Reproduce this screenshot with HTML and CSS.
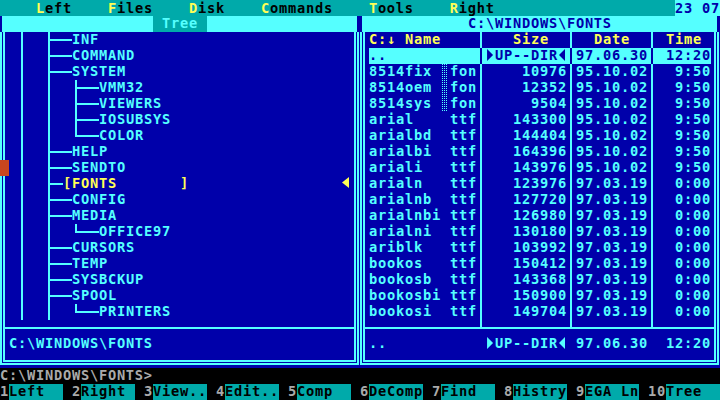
FILE: index.html
```html
<!DOCTYPE html>
<html>
<head>
<meta charset="utf-8">
<title>Navigator</title>
<link rel="stylesheet" href="styles.css">
</head>
<body>
<div class="screen">
  <div class="menubar">
    <nav class="menu">
      <span><b>L</b>eft</span>
      <span><b>F</b>iles</span>
      <span><b>D</b>isk</span>
      <span><b>C</b>ommands</span>
      <span><b>T</b>ools</span>
      <span><b>R</b>ight</span>
    </nav>
    <div class="clock">23 07</div>
  </div>

  <div class="panels">
    <section class="panel tree">
      <div class="head"><span class="title">Tree</span></div>
      <div class="row"><i></i><i></i><i class="v"></i><i></i><i></i><i class="t"></i><i class="h"></i><i class="h"></i><span>INF</span></div>
      <div class="row"><i></i><i></i><i class="v"></i><i></i><i></i><i class="t"></i><i class="h"></i><i class="h"></i><span>COMMAND</span></div>
      <div class="row"><i></i><i></i><i class="v"></i><i></i><i></i><i class="t"></i><i class="h"></i><i class="h"></i><span>SYSTEM</span></div>
      <div class="row"><i></i><i></i><i class="v"></i><i></i><i></i><i class="v"></i><i></i><i></i><i class="t"></i><i class="h"></i><i class="h"></i><span>VMM32</span></div>
      <div class="row"><i></i><i></i><i class="v"></i><i></i><i></i><i class="v"></i><i></i><i></i><i class="t"></i><i class="h"></i><i class="h"></i><span>VIEWERS</span></div>
      <div class="row"><i></i><i></i><i class="v"></i><i></i><i></i><i class="v"></i><i></i><i></i><i class="t"></i><i class="h"></i><i class="h"></i><span>IOSUBSYS</span></div>
      <div class="row"><i></i><i></i><i class="v"></i><i></i><i></i><i class="v"></i><i></i><i></i><i class="l"></i><i class="h"></i><i class="h"></i><span>COLOR</span></div>
      <div class="row"><i></i><i></i><i class="v"></i><i></i><i></i><i class="t"></i><i class="h"></i><i class="h"></i><span>HELP</span></div>
      <div class="row"><i class="thumb"></i><i></i><i class="v"></i><i></i><i></i><i class="t"></i><i class="h"></i><i class="h"></i><span>SENDTO</span></div>
      <div class="row"><i></i><i></i><i class="v"></i><i></i><i></i><i class="t"></i><i class="h"></i><span class="sel">[FONTS       ]</span><i class="tri lt here"></i></div>
      <div class="row"><i></i><i></i><i class="v"></i><i></i><i></i><i class="t"></i><i class="h"></i><i class="h"></i><span>CONFIG</span></div>
      <div class="row"><i></i><i></i><i class="v"></i><i></i><i></i><i class="t"></i><i class="h"></i><i class="h"></i><span>MEDIA</span></div>
      <div class="row"><i></i><i></i><i class="v"></i><i></i><i></i><i class="v"></i><i></i><i></i><i class="l"></i><i class="h"></i><i class="h"></i><span>OFFICE97</span></div>
      <div class="row"><i></i><i></i><i class="v"></i><i></i><i></i><i class="t"></i><i class="h"></i><i class="h"></i><span>CURSORS</span></div>
      <div class="row"><i></i><i></i><i class="v"></i><i></i><i></i><i class="t"></i><i class="h"></i><i class="h"></i><span>TEMP</span></div>
      <div class="row"><i></i><i></i><i class="v"></i><i></i><i></i><i class="t"></i><i class="h"></i><i class="h"></i><span>SYSBCKUP</span></div>
      <div class="row"><i></i><i></i><i class="v"></i><i></i><i></i><i class="t"></i><i class="h"></i><i class="h"></i><span>SPOOL</span></div>
      <div class="row"><i></i><i></i><i class="v"></i><i></i><i></i><i class="v"></i><i></i><i></i><i class="l"></i><i class="h"></i><i class="h"></i><span>PRINTERS</span></div>
      <div class="sepl"></div>
      <div class="info">C:\WINDOWS\FONTS</div>
      <div class="bottom"></div>
    </section>

    <section class="panel files">
      <div class="head"><span class="title">C:\WINDOWS\FONTS</span></div>
      <div class="frow hdr"><i></i><span class="nm">C:↓ Name</span><i class="s"></i><span class="sz">Size</span><i class="s"></i><span class="dt">Date</span><i class="s"></i><span class="tm">Time</span><i></i></div>
      <div class="frow cur"><i></i><span class="nm">..</span><i class="s"></i><span class="sz"><i class="tri rt"></i>UP--DIR<i class="tri lt"></i></span><i class="s"></i><span class="dt">97.06.30</span><i class="s"></i><span class="tm">12:20</span><i></i></div>
      <div class="frow"><i></i><span class="nm"><span class="fn">8514fix</span><i class="mk on"></i><span>fon</span></span><i class="s"></i><span class="sz">10976</span><i class="s"></i><span class="dt">95.10.02</span><i class="s"></i><span class="tm">9:50</span><i></i></div>
      <div class="frow"><i></i><span class="nm"><span class="fn">8514oem</span><i class="mk on"></i><span>fon</span></span><i class="s"></i><span class="sz">12352</span><i class="s"></i><span class="dt">95.10.02</span><i class="s"></i><span class="tm">9:50</span><i></i></div>
      <div class="frow"><i></i><span class="nm"><span class="fn">8514sys</span><i class="mk on"></i><span>fon</span></span><i class="s"></i><span class="sz">9504</span><i class="s"></i><span class="dt">95.10.02</span><i class="s"></i><span class="tm">9:50</span><i></i></div>
      <div class="frow"><i></i><span class="nm"><span class="fn">arial</span><i class="mk"></i><span>ttf</span></span><i class="s"></i><span class="sz">143300</span><i class="s"></i><span class="dt">95.10.02</span><i class="s"></i><span class="tm">9:50</span><i></i></div>
      <div class="frow"><i></i><span class="nm"><span class="fn">arialbd</span><i class="mk"></i><span>ttf</span></span><i class="s"></i><span class="sz">144404</span><i class="s"></i><span class="dt">95.10.02</span><i class="s"></i><span class="tm">9:50</span><i></i></div>
      <div class="frow"><i></i><span class="nm"><span class="fn">arialbi</span><i class="mk"></i><span>ttf</span></span><i class="s"></i><span class="sz">164396</span><i class="s"></i><span class="dt">95.10.02</span><i class="s"></i><span class="tm">9:50</span><i></i></div>
      <div class="frow"><i></i><span class="nm"><span class="fn">ariali</span><i class="mk"></i><span>ttf</span></span><i class="s"></i><span class="sz">143976</span><i class="s"></i><span class="dt">95.10.02</span><i class="s"></i><span class="tm">9:50</span><i></i></div>
      <div class="frow"><i></i><span class="nm"><span class="fn">arialn</span><i class="mk"></i><span>ttf</span></span><i class="s"></i><span class="sz">123976</span><i class="s"></i><span class="dt">97.03.19</span><i class="s"></i><span class="tm">0:00</span><i></i></div>
      <div class="frow"><i></i><span class="nm"><span class="fn">arialnb</span><i class="mk"></i><span>ttf</span></span><i class="s"></i><span class="sz">127720</span><i class="s"></i><span class="dt">97.03.19</span><i class="s"></i><span class="tm">0:00</span><i></i></div>
      <div class="frow"><i></i><span class="nm"><span class="fn">arialnbi</span><i class="mk"></i><span>ttf</span></span><i class="s"></i><span class="sz">126980</span><i class="s"></i><span class="dt">97.03.19</span><i class="s"></i><span class="tm">0:00</span><i></i></div>
      <div class="frow"><i></i><span class="nm"><span class="fn">arialni</span><i class="mk"></i><span>ttf</span></span><i class="s"></i><span class="sz">130180</span><i class="s"></i><span class="dt">97.03.19</span><i class="s"></i><span class="tm">0:00</span><i></i></div>
      <div class="frow"><i></i><span class="nm"><span class="fn">ariblk</span><i class="mk"></i><span>ttf</span></span><i class="s"></i><span class="sz">103992</span><i class="s"></i><span class="dt">97.03.19</span><i class="s"></i><span class="tm">0:00</span><i></i></div>
      <div class="frow"><i></i><span class="nm"><span class="fn">bookos</span><i class="mk"></i><span>ttf</span></span><i class="s"></i><span class="sz">150412</span><i class="s"></i><span class="dt">97.03.19</span><i class="s"></i><span class="tm">0:00</span><i></i></div>
      <div class="frow"><i></i><span class="nm"><span class="fn">bookosb</span><i class="mk"></i><span>ttf</span></span><i class="s"></i><span class="sz">143368</span><i class="s"></i><span class="dt">97.03.19</span><i class="s"></i><span class="tm">0:00</span><i></i></div>
      <div class="frow"><i></i><span class="nm"><span class="fn">bookosbi</span><i class="mk"></i><span>ttf</span></span><i class="s"></i><span class="sz">150900</span><i class="s"></i><span class="dt">97.03.19</span><i class="s"></i><span class="tm">0:00</span><i></i></div>
      <div class="frow"><i></i><span class="nm"><span class="fn">bookosi</span><i class="mk"></i><span>ttf</span></span><i class="s"></i><span class="sz">149704</span><i class="s"></i><span class="dt">97.03.19</span><i class="s"></i><span class="tm">0:00</span><i></i></div>
      <div class="frow sepr"><i></i><span></span><i class="s"></i><span></span><i class="s"></i><span></span><i class="s"></i><span></span><i></i></div>
      <div class="frow"><i></i><span class="nm">..</span><i></i><span class="sz"><i class="tri rt"></i>UP--DIR<i class="tri lt"></i></span><i></i><span class="dt">97.06.30</span><i></i><span class="tm">12:20</span><i></i></div>
      <div class="bottom"></div>
    </section>
  </div>

  <div class="prompt">C:\WINDOWS\FONTS&gt;</div>

  <div class="fkeys">
    <div class="fk"><span class="n">1</span><span class="l">Left</span></div>
    <div class="fk"><span class="n">2</span><span class="l">Right</span></div>
    <div class="fk"><span class="n">3</span><span class="l">View..</span></div>
    <div class="fk"><span class="n">4</span><span class="l">Edit..</span></div>
    <div class="fk"><span class="n">5</span><span class="l">Comp</span></div>
    <div class="fk"><span class="n">6</span><span class="l">DeComp</span></div>
    <div class="fk"><span class="n">7</span><span class="l">Find</span></div>
    <div class="fk"><span class="n">8</span><span class="l">Histry</span></div>
    <div class="fk"><span class="n">9</span><span class="l">EGA Ln</span></div>
    <div class="fk"><span class="n">10</span><span class="l">Tree</span></div>
  </div>
</div>
</body>
</html>
```

FILE: styles.css
```css
html, body {
  margin: 0;
  padding: 0;
  background: #000;
}

/* 9x16 character cells: 13.7px DejaVu Sans Mono advances 8.25px, +0.75px spacing */
body {
  font: bold 13.7px/14px "DejaVu Sans Mono", "Liberation Mono", monospace;
  letter-spacing: 0.75px;
  color: #55FFFF;
}

.screen {
  width: 720px;
  height: 400px;
  display: flex;
  flex-direction: column;
  overflow: hidden;
}

/* ---------- top menu ---------- */
.menubar {
  display: flex;
  height: 16px;
  flex: none;
  line-height: 16px;
}

.menu {
  width: 675px;
  box-sizing: border-box;
  padding-left: 36px;
  display: flex;
  gap: 36px;
  background: #00AAAA;
  color: #000;
}

.menu b {
  color: #FFFF55;
  font-weight: inherit;
}

.clock {
  flex: 1;
  background: #55FFFF;
  color: #0000AA;
}

/* ---------- panels ---------- */
.panels {
  display: grid;
  grid-template-columns: 360px 360px;
  height: 352px;
  flex: none;
}

.panel {
  position: relative;
  display: flex;
  flex-direction: column;
  background: #0000AA;
}

.panel::before,
.panel::after {
  content: "";
  position: absolute;
  border: 2px solid #55FFFF;
  border-top: 0;
  pointer-events: none;
}

.panel::before {
  top: 16px;
  left: 0;
  right: 1px;
  bottom: 3px;
}

.panel::after {
  top: 16px;
  left: 3px;
  right: 4px;
  bottom: 6px;
}

.head {
  height: 16px;
  flex: none;
  margin: 0 3px 0 2px;
  display: flex;
  background: #55FFFF;
  white-space: pre;
}

.tree .title {
  margin-left: 151px;
  padding: 0 9px;
  background: #00AAAA;
  color: #55FFFF;
}

.files .title {
  margin-left: 106px;
  color: #0000AA;
}

/* arrow marks (CP437 triangles) */
.tri {
  display: inline-block;
  width: 9px;
  height: 14px;
  vertical-align: top;
  background: currentColor;
}

.tri.rt {
  clip-path: polygon(1px 1px, 7px 7px, 1px 13px);
}

.tri.lt {
  clip-path: polygon(7px 1px, 1px 7px, 7px 13px);
}

/* tree rows */
.row {
  height: 16px;
  flex: none;
  display: flex;
  white-space: pre;
}

.row > i {
  width: 9px;
  flex: none;
}

.row .v {
  background: linear-gradient(#55FFFF, #55FFFF) 3px 0 / 2px 16px no-repeat;
}

.row .t {
  background:
    linear-gradient(#55FFFF, #55FFFF) 3px 0 / 2px 16px no-repeat,
    linear-gradient(#55FFFF, #55FFFF) 3px 7px / 6px 2px no-repeat;
}

.row .l {
  background:
    linear-gradient(#55FFFF, #55FFFF) 3px 0 / 2px 9px no-repeat,
    linear-gradient(#55FFFF, #55FFFF) 3px 7px / 6px 2px no-repeat;
}

.row .h {
  background: linear-gradient(#55FFFF, #55FFFF) 0 7px / 9px 2px no-repeat;
}

.row .thumb {
  position: relative;
  z-index: 1;
  background: #C8461E;
}

.sel {
  color: #FFFF55;
}

.row .here {
  margin-left: auto;
  margin-right: 9px;
  height: 13px;
  background: #FFFF55;
  clip-path: polygon(7px 1px, 0 6.5px, 7px 12px);
}

.sepl {
  height: 16px;
  flex: none;
  background: linear-gradient(#55FFFF, #55FFFF) 5px 7px / 349px 2px no-repeat;
}

.info {
  height: 16px;
  flex: none;
  padding-left: 9px;
  white-space: pre;
}

.bottom {
  height: 16px;
  flex: none;
}

/* file rows */
.frow {
  height: 16px;
  flex: none;
  display: grid;
  grid-template-columns: 9px 108px 9px 81px 9px 72px 9px 54px 9px;
  white-space: pre;
}

.frow .nm {
  display: flex;
}

.frow .fn {
  width: 72px;
}

.frow .mk {
  width: 9px;
  flex: none;
}

.frow .mk.on {
  box-sizing: border-box;
  padding: 0 2px 0 1px;
  background: conic-gradient(#55FFFF 0 25%, transparent 0) 0 0 / 2px 2px;
  background-clip: content-box;
}

.frow .sz,
.frow .tm {
  text-align: right;
}

.frow .s {
  --lc: #55FFFF;
  background-image: linear-gradient(var(--lc), var(--lc));
  background-position: 3px 0;
  background-size: 2px 16px;
  background-repeat: no-repeat;
}

.frow.hdr {
  color: #FFFF55;
}

.frow.hdr .sz {
  text-align: left;
  padding-left: 27px;
}

.frow.hdr .dt {
  padding-left: 18px;
}

.frow.hdr .tm {
  text-align: left;
  padding-left: 9px;
}

.frow.cur > :not(:first-child):not(:last-child) {
  background-color: #55FFFF;
  color: #0000AA;
}

.frow.cur .s {
  --lc: #0000AA;
}

.frow.sepr {
  background: linear-gradient(#55FFFF, #55FFFF) 5px 7px / 349px 2px no-repeat;
}

.frow.sepr .s {
  background-size: 2px 8px;
}

/* ---------- command line ---------- */
.prompt {
  height: 16px;
  flex: none;
  color: #AAAAAA;
  white-space: pre;
}

.fkeys {
  height: 16px;
  flex: none;
  display: flex;
  gap: 9px;
}

.fk {
  display: flex;
}

.fk .n {
  color: #AAAAAA;
}

.fk .l {
  width: 54px;
  background: #00AAAA;
  color: #000;
  white-space: pre;
}
```
